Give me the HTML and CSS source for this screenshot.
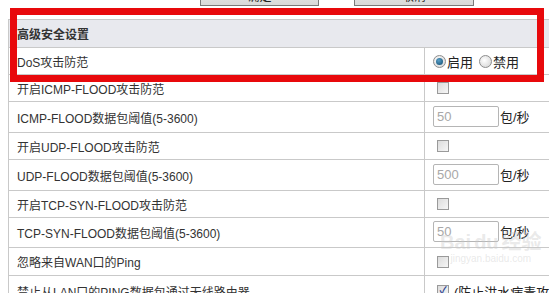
FILE: index.html
```html
<!DOCTYPE html>
<html>
<head>
  <title>高级安全设置</title>
  <link rel="stylesheet" href="styles.css">
</head>
<body>
  <div class="actions">
    <button class="btn btn-first">确定</button>
    <button class="btn btn-second">取消</button>
  </div>

  <div class="panel">
    <div class="row head">
      <div class="cell">高级安全设置</div>
    </div>
    <div class="row">
      <div class="cell">DoS攻击防范</div>
      <div class="cell value">
        <span class="radio on"></span><span class="opt">启用</span>
        <span class="radio"></span><span class="opt">禁用</span>
      </div>
    </div>
    <div class="row">
      <div class="cell">开启ICMP-FLOOD攻击防范</div>
      <div class="cell value"><span class="check"></span></div>
    </div>
    <div class="row tall">
      <div class="cell">ICMP-FLOOD数据包阈值(5-3600)</div>
      <div class="cell value"><span class="field">50</span><span class="unit">包/秒</span></div>
    </div>
    <div class="row">
      <div class="cell">开启UDP-FLOOD攻击防范</div>
      <div class="cell value"><span class="check"></span></div>
    </div>
    <div class="row tall">
      <div class="cell">UDP-FLOOD数据包阈值(5-3600)</div>
      <div class="cell value"><span class="field">500</span><span class="unit">包/秒</span></div>
    </div>
    <div class="row">
      <div class="cell">开启TCP-SYN-FLOOD攻击防范</div>
      <div class="cell value"><span class="check"></span></div>
    </div>
    <div class="row mid">
      <div class="cell">TCP-SYN-FLOOD数据包阈值(5-3600)</div>
      <div class="cell value"><span class="field">50</span><span class="unit">包/秒</span></div>
    </div>
    <div class="row ping">
      <div class="cell">忽略来自WAN口的Ping</div>
      <div class="cell value"><span class="check"></span></div>
    </div>
    <div class="row last">
      <div class="cell">禁止从LAN口的PING数据包通过无线路由器</div>
      <div class="cell value"><span class="check checked">✓</span><span class="opt">(防止洪水病毒攻击)</span></div>
    </div>
  </div>

  <div class="watermark">
    <div class="wm-logo">Bai<span class="wm-du">du</span>经验</div>
    <div class="wm-url">jingyan.baidu.com</div>
  </div>

  <div class="highlight"></div>
</body>
</html>
```

FILE: styles.css
```css
body {
  margin: 0;
  padding: 0;
  background: #fff;
  font-family: "Liberation Sans", "Noto Sans CJK SC", sans-serif;
  font-size: 12px;
  color: #333;
  overflow: hidden;
}

.actions {
  display: flex;
  height: 19px;
  align-items: flex-start;
}

.btn {
  height: 22px;
  margin-top: -16px;
  background: linear-gradient(#ececec, #d9d9d9);
  border: 1px solid #7a7a7a;
  font-family: inherit;
  font-size: 12px;
  color: #222;
  padding: 0;
}

.btn-first {
  width: 119px;
  margin-left: 200px;
}

.btn-second {
  width: 120px;
  margin-left: 35px;
}

.panel {
  margin-left: 8px;
  width: 620px;
  border-top: 1px solid #c9c9c9;
  border-left: 1px solid #c9c9c9;
}

.row {
  display: grid;
  grid-template-columns: 415px 1fr;
  height: 27px;
  box-sizing: border-box;
  border-bottom: 1px solid #c9c9c9;
}

.row.head {
  height: 28px;
  background: #e8e9ee;
  font-weight: bold;
  grid-template-columns: 1fr;
}

.row.tall { height: 31px; }
.row.mid { height: 30px; }
.row.ping { height: 28px; }
.row.last { height: 30px; border-bottom: none; }

.cell {
  display: flex;
  align-items: center;
  padding-left: 8px;
  white-space: nowrap;
}

.cell.value {
  border-left: 1px solid #c9c9c9;
  padding-left: 8px;
}

.radio {
  width: 11px;
  height: 11px;
  border: 1px solid #8d8d8d;
  border-radius: 50%;
  background: radial-gradient(circle at 40% 40%, #ffffff, #d0d0d0);
  position: relative;
}

.radio.on::after {
  content: "";
  position: absolute;
  left: 2px;
  top: 2px;
  width: 7px;
  height: 7px;
  border-radius: 50%;
  background: radial-gradient(circle at 40% 35%, #5aa0c8, #0f4a6e);
}

.opt {
  margin-left: 1px;
  margin-right: 6px;
  font-size: 13px;
  color: #222;
}

.check {
  width: 10px;
  height: 10px;
  margin-left: 4px;
  border: 1px solid #9a9a9a;
  background: linear-gradient(135deg, #dcdcdc, #f6f6f6);
  font-size: 10px;
  line-height: 10px;
  text-align: center;
  color: #2a3f8f;
  font-weight: bold;
}

.check.checked {
  margin-right: 4px;
}

.field {
  width: 61px;
  height: 19px;
  border: 1px solid #b5b5b5;
  border-radius: 2px;
  padding-left: 3px;
  line-height: 19px;
  color: #a8a8a8;
  font-size: 13px;
  margin-top: -2px;
}

.unit {
  margin-left: 1px;
  font-size: 13px;
  color: #222;
  margin-top: -2px;
}

.watermark {
  position: absolute;
  left: 440px;
  top: 231px;
  color: rgba(200, 200, 200, 0.4);
  text-align: center;
  white-space: nowrap;
}

.wm-logo {
  font-size: 20px;
  font-weight: bold;
  line-height: 22px;
}

.wm-du {
  margin: 0 3px;
}

.wm-url {
  font-size: 10px;
  line-height: 12px;
}

.highlight {
  position: absolute;
  left: 10px;
  top: 8px;
  width: 534px;
  height: 74px;
  box-sizing: border-box;
  border: 7px solid #e8090c;
}
```
